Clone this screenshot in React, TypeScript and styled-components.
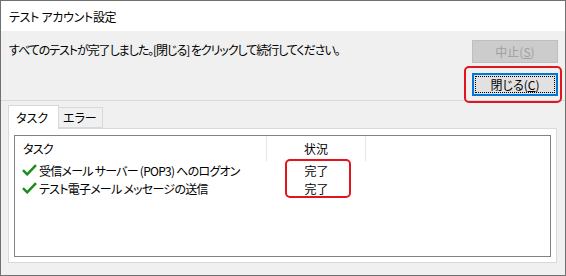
import styled, { createGlobalStyle } from 'styled-components';

const GlobalStyle = createGlobalStyle`
	html, body {
		margin: 0;
		padding: 0;
		background: #3c3c3c;
		overflow: hidden;
	}
	body {
		font-family: "Noto Sans CJK JP", "Noto Sans", sans-serif;
		font-size: 12px;
		font-feature-settings: "palt";
		color: #000;
	}
`;

const Window = styled.div`
	display: flex;
	flex-direction: column;
	box-sizing: border-box;
	width: 566px;
	height: 276px;
	border: 1px solid #707070;
	background: #f0f0f0;
`;

const TitleBar = styled.header`
	display: flex;
	align-items: center;
	height: 30px;
	padding-left: 8px;
	background: #fff;
	font-size: 12px;
	letter-spacing: -0.3px;
`;

const TopSection = styled.section`
	display: flex;
	justify-content: space-between;
	height: 69px;
	box-sizing: border-box;
	padding: 9px 7px 0 8px;
`;

const Message = styled.p`
	margin: 2px 0 0;
	line-height: 16px;
	letter-spacing: -1.05px;
`;

const ButtonColumn = styled.div`
	display: flex;
	flex-direction: column;
	gap: 10px;
`;

const Highlight = styled.div`
	position: relative;

	&::after {
		content: '';
		position: absolute;
		top: -7px;
		right: -4px;
		bottom: -7px;
		left: -8px;
		border: 2px solid #e0151f;
		border-radius: 5px;
		z-index: 2;
		pointer-events: none;
	}
`;

const DialogButton = styled.button<{ $focused?: boolean }>`
	display: flex;
	align-items: center;
	justify-content: center;
	box-sizing: border-box;
	width: 86px;
	height: 23px;
	padding: 0;
	font: inherit;
	font-feature-settings: "palt";
	color: ${(p) => (p.disabled ? '#a0a0a0' : '#000')};
	background: ${(p) => (p.disabled ? '#cccccc' : '#e1e1e1')};
	border: ${(p) => (p.$focused ? '2px solid #0078d7' : '1px solid #bfbfbf')};
	position: relative;

	${(p) =>
		p.$focused &&
		`
		&::before {
			content: '';
			position: absolute;
			inset: 1px;
			border: 1px dotted #000;
		}
	`}
`;

const LowerSection = styled.section`
	display: flex;
	flex-direction: column;
	border-top: 1px solid #d9d9d9;
	padding: 5px 8px 0 7px;
`;

const TabStrip = styled.div`
	display: flex;
	align-items: flex-end;
	height: 23px;
	margin-bottom: -1px;
	position: relative;
	z-index: 1;
`;

const Tab = styled.div<{ $active?: boolean }>`
	display: flex;
	align-items: center;
	box-sizing: border-box;
	height: ${(p) => (p.$active ? '24px' : '21px')};
	width: ${(p) => (p.$active ? '51px' : '44px')};
	padding-left: ${(p) => (p.$active ? '7px' : '4px')};
	background: ${(p) => (p.$active ? '#fff' : '#f0f0f0')};
	border: 1px solid #d9d9d9;
	border-bottom: ${(p) => (p.$active ? 'none' : '1px solid #d9d9d9')};
	${(p) => (p.$active ? '' : 'border-left: none; margin-bottom: 1px;')}
`;

const TabPanel = styled.div`
	display: flex;
	box-sizing: border-box;
	height: 135px;
	padding: 6px 5px 5px;
	background: #fff;
	border: 1px solid #d9d9d9;
`;

const ListBox = styled.div`
	flex: 1;
	display: flex;
	flex-direction: column;
	border: 1px solid #828282;
	background: #fff;
`;

const Row = styled.div<{ $header?: boolean }>`
	display: grid;
	grid-template-columns: 252px 99px;
	height: ${(p) => (p.$header ? '25px' : '18px')};
	align-items: stretch;
`;

const Cell = styled.div<{ $header?: boolean; $center?: boolean }>`
	display: flex;
	align-items: center;
	justify-content: ${(p) => (p.$center ? 'center' : 'flex-start')};
	padding-left: ${(p) => (p.$center ? '0' : p.$header ? '8px' : '7px')};
	gap: 2px;
	border-right: ${(p) => (p.$header ? '1px solid #e5e5e5' : 'none')};
	letter-spacing: ${(p) => (p.$center ? '0' : '-0.75px')};
	white-space: nowrap;
`;

const Rows = styled.div`
	position: relative;

	&::after {
		content: '';
		position: absolute;
		top: -2px;
		bottom: -1px;
		left: 270px;
		width: 66px;
		border: 2px solid #e0151f;
		border-radius: 5px;
		box-sizing: border-box;
		pointer-events: none;
	}
`;

function Check() {
	return (
		<svg width="15" height="12" viewBox="0 0 15 12" style={{ flexShrink: 0 }}>
			<path
				d="M1 6.2 L5.2 10.4 L14 1.2"
				fill="none"
				stroke="#1b8b1b"
				strokeWidth="2.4"
			/>
		</svg>
	);
}

const tasks = [
	{ name: '受信メール サーバー (POP3) へのログオン', status: '完了' },
	{ name: 'テスト電子メール メッセージの送信', status: '完了' },
];

export default function App() {
	return (
		<>
			<GlobalStyle />
			<Window>
				<TitleBar>テスト アカウント設定</TitleBar>
				<TopSection>
					<Message>
						すべてのテストが完了しました。[閉じる] をクリックして続行してください。
					</Message>
					<ButtonColumn>
						<DialogButton disabled>
							中止(<u>S</u>)
						</DialogButton>
						<Highlight>
							<DialogButton $focused>
								閉じる(<u>C</u>)
							</DialogButton>
						</Highlight>
					</ButtonColumn>
				</TopSection>
				<LowerSection>
					<TabStrip>
						<Tab $active>タスク</Tab>
						<Tab>エラー</Tab>
					</TabStrip>
					<TabPanel>
						<ListBox>
							<Row $header>
								<Cell $header>タスク</Cell>
								<Cell $header $center>
									状況
								</Cell>
							</Row>
							<Rows>
								{tasks.map((task) => (
									<Row key={task.name}>
										<Cell>
											<Check />
											{task.name}
										</Cell>
										<Cell $center>{task.status}</Cell>
									</Row>
								))}
							</Rows>
						</ListBox>
					</TabPanel>
				</LowerSection>
			</Window>
		</>
	);
}
